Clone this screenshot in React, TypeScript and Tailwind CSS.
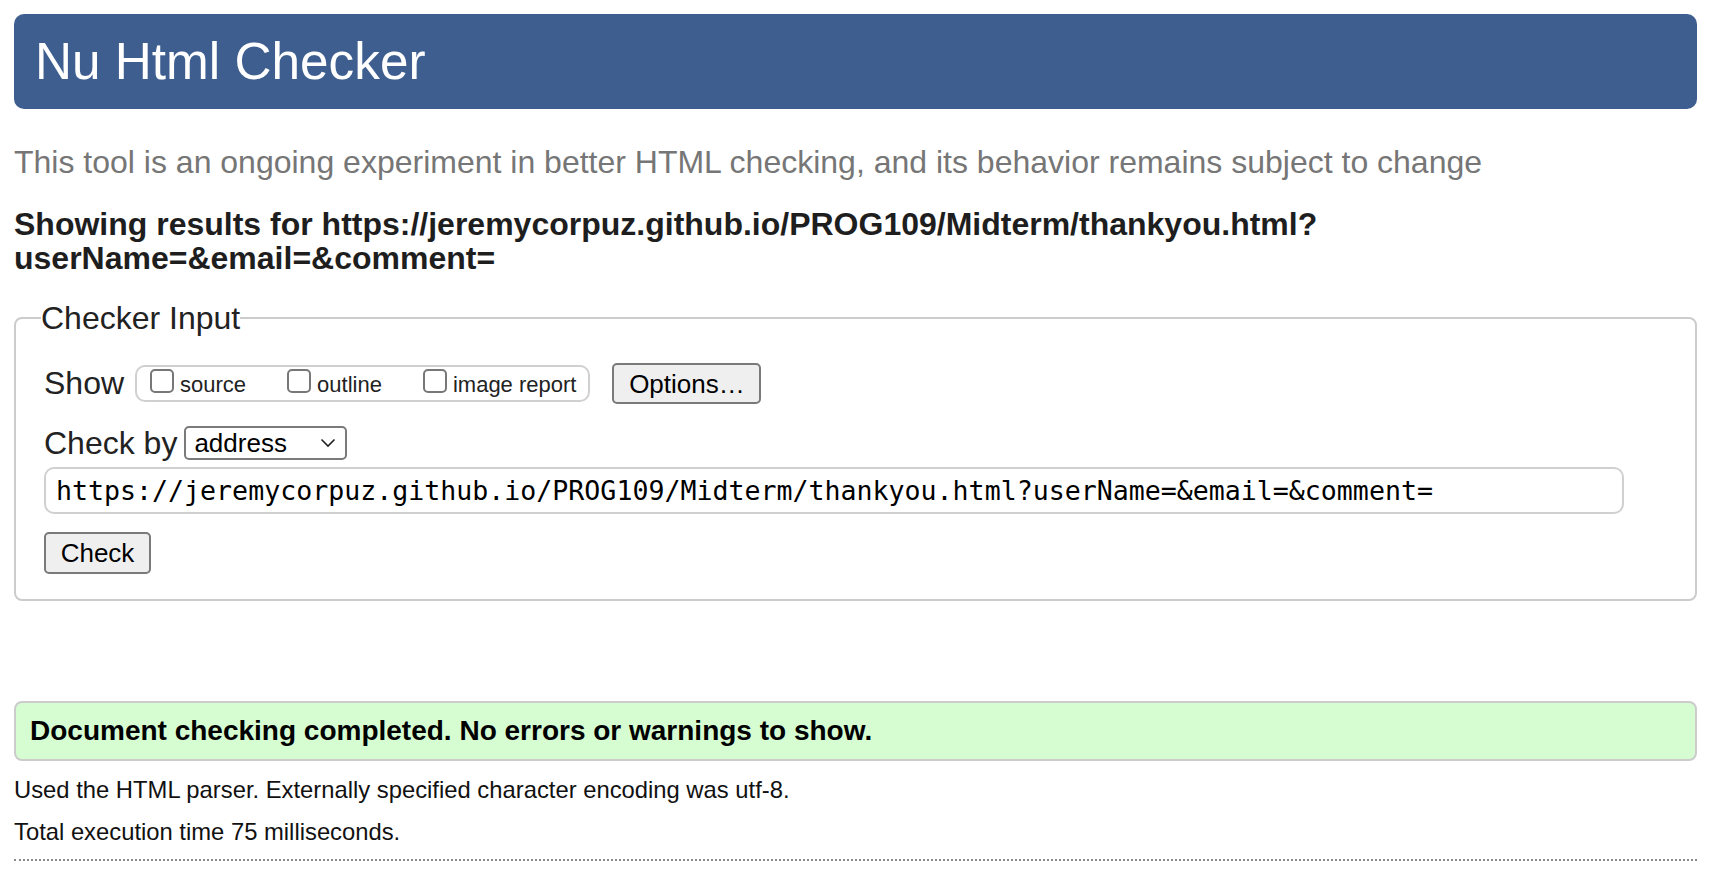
import React from "react";

function Checkbox({ label, className = "" }: { label: string; className?: string }) {
  return (
    <label className={`flex items-start ${className}`}>
      <input
        type="checkbox"
        className="appearance-none w-[24px] h-[24px] mt-[1px] rounded-[5px] border-2 border-[#777777] bg-white shrink-0"
      />
      <span className="ml-[6px] mt-[4px] text-[22px] leading-[25px] text-[#222222]">{label}</span>
    </label>
  );
}

export default function App() {
  return (
    <div className="bg-white pl-[14px] pr-[19px] pt-[14px] font-['Liberation_Sans',Arial,sans-serif] text-[#222222]">
      <h1 className="h-[95px] flex items-center pl-[21px] rounded-[10px] bg-[#3d5e8f] text-white text-[51.3px] leading-[60px] font-normal">
        Nu Html Checker
      </h1>

      <p className="mt-[35px] text-[32px] leading-[37px] text-[#767676]">
        This tool is an ongoing experiment in better HTML checking, and its behavior remains subject to change
      </p>

      <h2 className="mt-[26px] text-[32px] leading-[34px] font-bold text-[#1e1e1e]">
        Showing results for https://jeremycorpuz.github.io/PROG109/Midterm/thankyou.html?
        <br />
        userName=&amp;email=&amp;comment=
      </h2>

      <fieldset className="mt-[26px] border-2 border-[#cccccc] rounded-[8px] pl-[28px] pr-[70px] pb-[25px] pt-0">
        <legend className="ml-[-3px] p-0 text-[32px] leading-[34px] text-[#222222]">Checker Input</legend>

        <div className="mt-[28px] h-[41px] flex items-center">
          <span className="text-[32px] leading-[37px]">Show</span>
          <div className="ml-[11px] h-[37px] flex items-start pt-[1px] pl-[13px] pr-[12px] border-2 border-[#d0d0d0] rounded-[10px]">
            <Checkbox label="source" />
            <Checkbox label="outline" className="ml-[41px]" />
            <Checkbox label="image report" className="ml-[41px]" />
          </div>
          <button
            type="button"
            className="ml-[22px] w-[149px] h-[41px] bg-[#efefef] border-2 border-[#7a7a7a] rounded-[5px] text-[26px] leading-[30px] text-black"
          >
            Options…
          </button>
        </div>

        <div className="mt-[22px] h-[34px] flex items-center">
          <span className="text-[32px] leading-[37px]">Check by</span>
          <div className="ml-[7px] w-[163px] h-[34px] flex items-center justify-between pl-[8px] pr-[8px] border-2 border-[#7a7a7a] rounded-[5px] bg-white">
            <span className="text-[26px] leading-[30px] text-black">address</span>
            <svg width="16" height="10" viewBox="0 0 16 10" className="mr-[1px]">
              <polyline points="1.5,1.5 8,8 14.5,1.5" fill="none" stroke="#222" strokeWidth="1.6" />
            </svg>
          </div>
        </div>

        <div className="mt-[7px]">
          <input
            type="text"
            readOnly
            defaultValue="https://jeremycorpuz.github.io/PROG109/Midterm/thankyou.html?userName=&email=&comment="
            className="block w-[1580px] h-[47px] pl-[10px] pr-[8px] border-2 border-[#d0d0d0] rounded-[10px] bg-white font-['DejaVu_Sans_Mono',Menlo,monospace] text-[26.6px] text-black outline-none"
          />
        </div>

        <div className="mt-[18px]">
          <button
            type="button"
            className="w-[107px] h-[42px] bg-[#efefef] border-2 border-[#7a7a7a] rounded-[5px] text-[26px] leading-[30px] text-black"
          >
            Check
          </button>
        </div>
      </fieldset>

      <div className="mt-[100px] h-[60px] flex items-center pl-[14px] bg-[#d6fcd2] border-2 border-[#cccccc] rounded-[8px]">
        <p className="text-[28px] leading-[32px] font-bold text-black">
          Document checking completed. No errors or warnings to show.
        </p>
      </div>

      <p className="mt-[15px] text-[23.8px] leading-[28px] text-[#111111]">
        Used the HTML parser. Externally specified character encoding was utf-8.
      </p>
      <p className="mt-[14px] text-[23.8px] leading-[28px] text-[#111111]">Total execution time 75 milliseconds.</p>

      <hr className="mt-[13px] border-0 border-t-2 border-dotted border-[#8a8a8a]" />
    </div>
  );
}
